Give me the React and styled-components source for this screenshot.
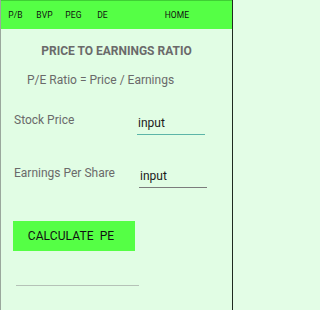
import React from 'react'
import styled, { createGlobalStyle } from 'styled-components'

const GlobalStyle = createGlobalStyle`
  html, body {
    margin: 0;
    padding: 0;
    background: #e3fde6;
  }
  body {
    font-family: Roboto, "Liberation Sans", sans-serif;
  }
`

const Screen = styled.div`
  width: 231px;
  height: 310px;
  display: flex;
  flex-direction: column;
  background: #e1fde4;
  border-left: 1px solid #9aa89c;
  border-right: 1px solid #1f2a20;
  box-sizing: content-box;
`

const Header = styled.nav`
  height: 28px;
  display: flex;
  align-items: center;
  background: #55ff45;
  border-top: 1px solid #3fcf34;
`

const NavItem = styled.span`
  width: ${({ wide }) => (wide ? '40px' : '29px')};
  margin-left: ${({ push }) => push || 0}px;
  text-align: center;
  font-size: 8.5px;
  color: #111;
  letter-spacing: 0.1px;
`

const Body = styled.main`
  display: flex;
  flex-direction: column;
`

const Title = styled.h1`
  margin: 15px 0 0 0;
  text-align: center;
  font-size: 12px;
  font-weight: bold;
  color: #6a6a6a;
  line-height: 14px;
`

const Formula = styled.p`
  margin: 14px 0 0 26px;
  font-size: 12px;
  color: #6a6a6a;
  line-height: 16px;
`

const Field = styled.div`
  display: grid;
  grid-template-columns: 123px 1fr;
  margin-top: ${({ top }) => top}px;
  padding-left: 13px;
`

const Label = styled.label`
  font-size: 12px;
  color: #6a6a6a;
  line-height: 16px;
`

const Input = styled.div`
  width: 67px;
  margin-left: ${({ shift }) => shift || 0}px;
  margin-top: 3px;
  padding: 0 0 3px 1px;
  font-size: 12px;
  line-height: 16px;
  color: #1b1b1b;
  border-bottom: ${({ focused }) =>
    focused ? '1.5px solid #5cb5a8' : '1px solid #7c7c7c'};
`

const Button = styled.button`
  align-self: flex-start;
  margin: 33px 0 0 12px;
  width: 122px;
  height: 30px;
  border: none;
  background: #55ff45;
  font-family: Roboto, "Liberation Sans", sans-serif;
  font-size: 12px;
  color: #111;
  letter-spacing: 0.1px;
  padding: 0 6px 0 0;
  word-spacing: 3px;
`

const ResultLine = styled.div`
  margin: 34px 0 0 15px;
  width: 123px;
  border-bottom: 1px solid #b5c2b7;
`

export default function App() {
  return (
    <>
      <GlobalStyle />
      <Screen>
        <Header>
          <NavItem>P/B</NavItem>
          <NavItem>BVP</NavItem>
          <NavItem>PEG</NavItem>
          <NavItem>DE</NavItem>
          <NavItem wide push={40}>HOME</NavItem>
        </Header>
        <Body>
          <Title>PRICE TO EARNINGS RATIO</Title>
          <Formula>P/E Ratio = Price / Earnings</Formula>
          <Field top={24}>
            <Label>Stock Price</Label>
            <Input focused>input</Input>
          </Field>
          <Field top={30}>
            <Label>Earnings Per Share</Label>
            <Input shift={2}>input</Input>
          </Field>
          <Button>CALCULATE PE</Button>
          <ResultLine />
        </Body>
      </Screen>
    </>
  )
}
